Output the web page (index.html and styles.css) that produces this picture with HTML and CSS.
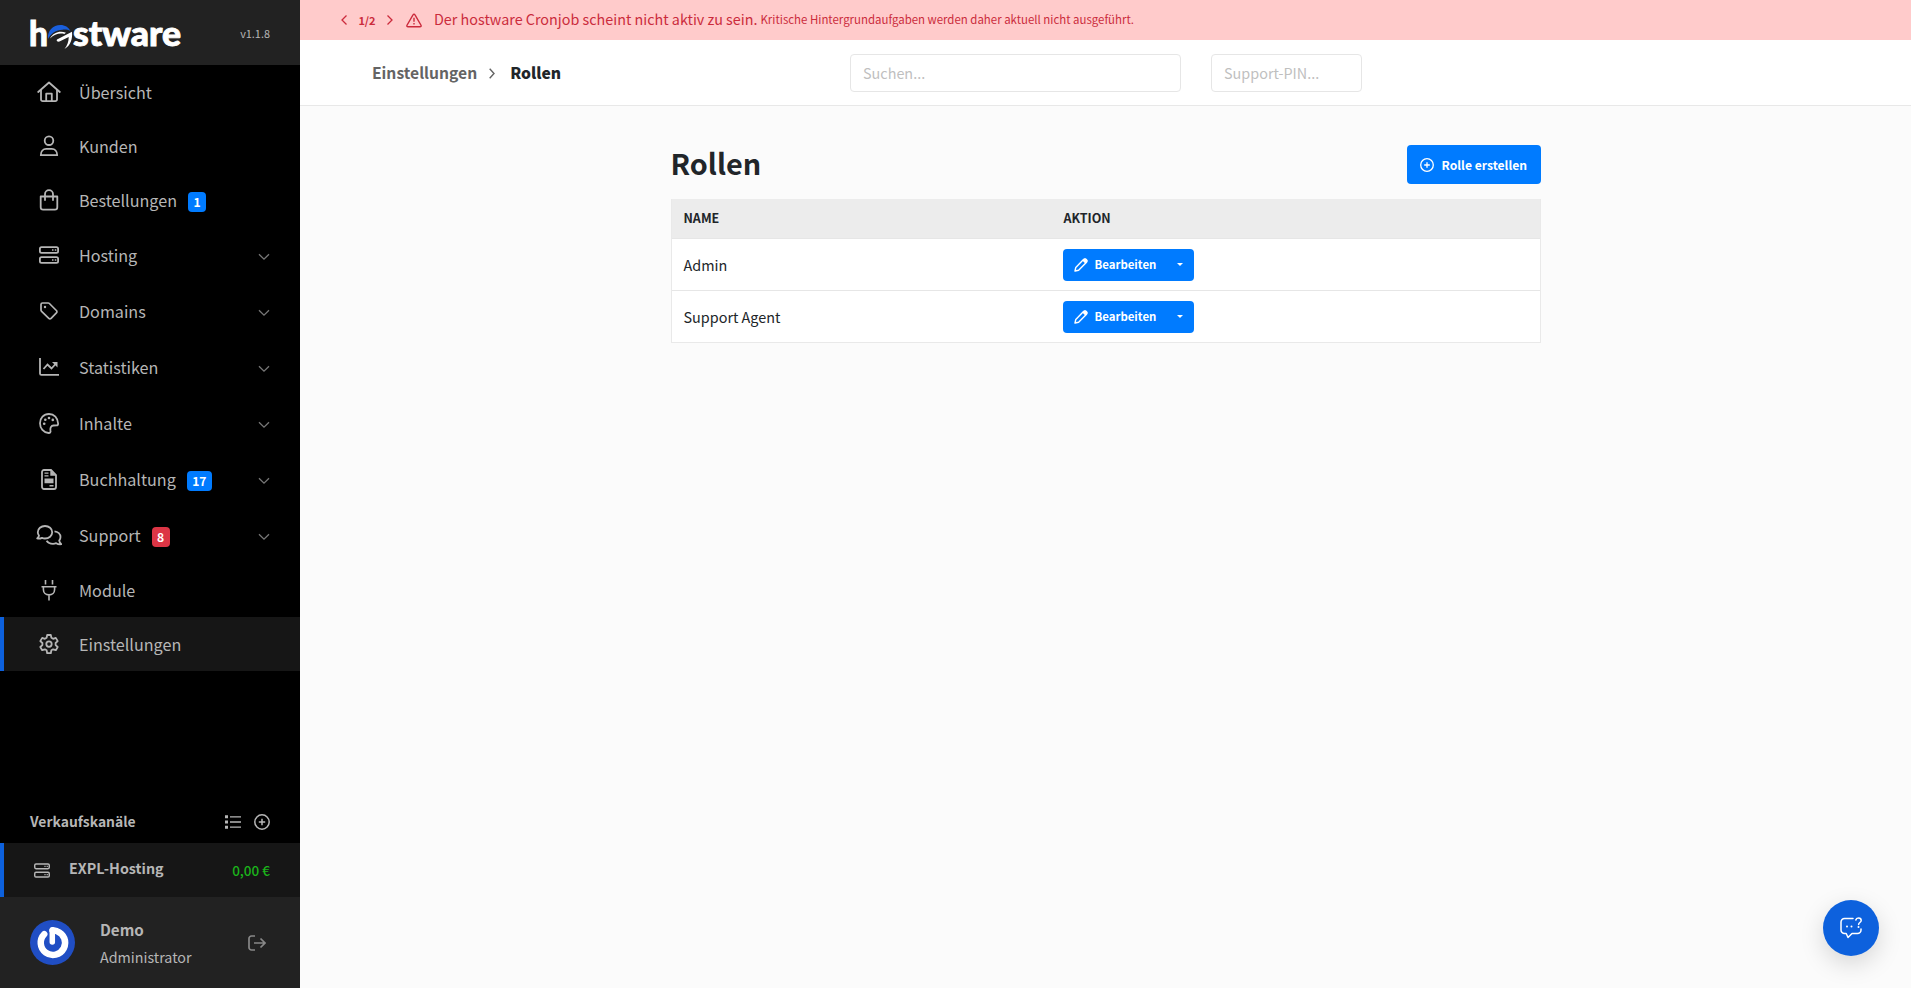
FILE: index.html
```html
<!DOCTYPE html>
<html lang="de">
<head>
<meta charset="utf-8">
<title>Rollen – hostware</title>
<link rel="stylesheet" href="styles.css">
</head>
<body>
<svg width="0" height="0" class="sprite" aria-hidden="true">
  <symbol id="chev" viewBox="0 0 12 8"><path d="M1 1.2l5 5 5-5" fill="none" stroke="currentColor" stroke-width="1.3"/></symbol>
  <symbol id="server" viewBox="0 0 20 18"><g fill="none" stroke="currentColor" stroke-width="1.8"><rect x=".9" y="1.2" width="18.2" height="5.6" rx="1.6"/><rect x=".9" y="11.2" width="18.2" height="5.6" rx="1.6"/></g><path d="M13 3.3h1.5v1.4H13zM15.8 3.3h1.5v1.4h-1.5zM13 13.3h1.5v1.4H13zM15.8 13.3h1.5v1.4h-1.5z" fill="currentColor"/></symbol>
  <symbol id="plus" viewBox="0 0 16 16"><g fill="none" stroke="currentColor"><circle cx="8" cy="8" r="7.2" stroke-width="1.5"/><path d="M8 4.8v6.4M4.8 8h6.4" stroke-width="1.5"/></g></symbol>
  <symbol id="pencil" viewBox="0 0 14 14"><path d="M1 13l.8-3.6 7.7-7.8c.9-.9 2-.8 2.800 0 .8.800.9 1.900 0 2.800l-7.700 7.800z" fill="none" stroke="currentColor" stroke-width="1.400" stroke-linejoin="round"/><path d="M8.300 2.600L10 1c1-.8 2-.6 2.700.2.800.8.900 1.900.1 2.800l-1.500 1.600z" fill="currentColor"/></symbol>
</svg>
<div class="app">
  <aside class="sidebar">
    <div class="brand">
      <svg class="logo" width="154" height="45" viewBox="0 0 154 45" role="img" aria-label="hostware">
        <text class="logo-text" x="-1" y="36.200" textLength="19" lengthAdjust="spacingAndGlyphs">h</text>
        <text class="logo-text" x="43" y="36.200" textLength="108" lengthAdjust="spacingAndGlyphs">stware</text>
        <path d="M18 29C17 21 23 15 30.500 15c4.500 0 8 2.200 10 6-2.500-1.300-5-1.600-8-1.300C26 20.300 21 23 18 29z" fill="#1a5fdc"/>
        <path d="M20 28.500c3.500-6 9.500-8 16-5.800l-1.700 1.300c-4.800-1.300-10 .3-14.300 4.500z" fill="#fff"/>
        <path d="M27 29.500l15-7.800c.8 7.300-1.500 13.800-7.500 17.300 2.900-3.600 4.200-7.800 4.200-12l-9.200 4.500c-1.800.6-3.600-.8-2.500-2z" fill="#fff"/>
      </svg>
      <span class="version">v1.1.8</span>
    </div>
    <nav class="menu">
      <a class="item"><span class="ico"><svg width="24" height="22" viewBox="0 0 24 22"><g fill="none" stroke="currentColor" stroke-width="1.800" stroke-linejoin="round" stroke-linecap="round"><path d="M1.200 11L12 1.500 22.800 11"/><path d="M4 9v9.500a1.700 1.700 0 0 0 1.700 1.700h12.600a1.700 1.700 0 0 0 1.700-1.700V9"/><path d="M9.200 20v-7.300h5.600V20"/></g></svg></span><span class="label">Übersicht</span></a>
      <a class="item"><span class="ico"><svg width="20" height="22" viewBox="0 0 20 22"><g fill="none" stroke="currentColor" stroke-width="1.800" stroke-linejoin="round"><circle cx="10" cy="5.700" r="4.300"/><path d="M1.800 20.200c0-4 2.400-6.400 5.400-6.400h5.600c3 0 5.400 2.400 5.400 6.400z"/></g></svg></span><span class="label">Kunden</span></a>
      <a class="item"><span class="ico"><svg width="20" height="22" viewBox="0 0 20 22"><g fill="none" stroke="currentColor" stroke-width="1.800" stroke-linecap="round"><path d="M1.700 7.500h16.600v10.700a2.400 2.400 0 0 1-2.400 2.400H4.100a2.400 2.400 0 0 1-2.400-2.400z" stroke-linejoin="round"/><path d="M6 11V5.200a4 4 0 0 1 8 0V11"/></g></svg></span><span class="label">Bestellungen</span><span class="badge">1</span></a>
      <a class="item sub"><span class="ico"><svg width="20" height="18"><use href="#server"/></svg></span><span class="label">Hosting</span><svg class="chev" width="12" height="8"><use href="#chev"/></svg></a>
      <a class="item sub"><span class="ico"><svg width="18" height="18" viewBox="0 0 18 18"><path d="M1 2.500A1.500 1.500 0 0 1 2.500 1h5.700c.5 0 .9.200 1.200.5l7 7c.7.700.7 1.600 0 2.300l-5.300 5.500c-.7.700-1.600.7-2.300 0l-7.200-7c-.4-.4-.6-.8-.6-1.300z" fill="none" stroke="currentColor" stroke-width="1.700"/><circle cx="5" cy="5" r="1.200" fill="currentColor"/></svg></span><span class="label">Domains</span><svg class="chev" width="12" height="8"><use href="#chev"/></svg></a>
      <a class="item sub"><span class="ico"><svg width="20" height="18" viewBox="0 0 20 18"><g fill="none" stroke="currentColor" stroke-width="1.800"><path d="M1 0v15.500c0 .9.500 1.400 1.400 1.400H20"/><path d="M4.500 11l4-4.500 4 4L17 5.500"/></g><path d="M13 4h5.500v5.500z" fill="currentColor"/></svg></span><span class="label">Statistiken</span><svg class="chev" width="12" height="8"><use href="#chev"/></svg></a>
      <a class="item sub"><span class="ico"><svg width="20" height="21" viewBox="0 0 20 21"><path d="M10 1C4.600 1 1 5.200 1 10.300c0 5 3.500 9.500 8.600 9.700 1.500.1 2.200-1 1.900-2.300-.5-2.600.5-5.100 3-5.200l3.200-.1c1 0 1.500-.7 1.400-1.900C18.800 5 15.200 1 10 1z" fill="none" stroke="currentColor" stroke-width="1.800"/><g fill="currentColor"><circle cx="5.200" cy="10.700" r="1.300"/><circle cx="6.300" cy="6.800" r="1.300"/><circle cx="10" cy="5" r="1.300"/><circle cx="13.800" cy="6.900" r="1.300"/></g></svg></span><span class="label">Inhalte</span><svg class="chev" width="12" height="8"><use href="#chev"/></svg></a>
      <a class="item sub"><span class="ico"><svg width="16" height="21" viewBox="0 0 16 21"><path d="M1 3a2 2 0 0 1 2-2h7l5 5v12a2 2 0 0 1-2 2H3a2 2 0 0 1-2-2z" fill="none" stroke="currentColor" stroke-width="1.800"/><path d="M9.300 1v5.700H15L9.300 1zM3.500 9.500h9v4.800h-9zM3.500 3.500h4v1.200h-4zM3.500 6.200h4v1.200h-4zM8.500 16h4v1.400h-4z" fill="currentColor"/></svg></span><span class="label">Buchhaltung</span><span class="badge">17</span><svg class="chev" width="12" height="8"><use href="#chev"/></svg></a>
      <a class="item sub"><span class="ico"><svg width="26" height="21" viewBox="0 0 26 21"><g fill="none" stroke="currentColor" stroke-width="1.800" stroke-linejoin="round"><path d="M1.200 13.500c1.200-1.100 1.700-2 1.800-2.900-.9-1-1.200-2.100-1.200-3.300C1.800 3.700 5 1 9 1s7.200 2.700 7.200 6.300-3.200 6.200-7.200 6.200c-1.100 0-2.100-.2-3-.6-1.600.8-3.200 1-4.800.6z"/><path d="M18.500 6.300c3.500.4 6 2.800 6 5.800 0 1.400-.5 2.500-1.300 3.500.2 1.200.9 2.300 2 3.600-2 .2-3.700-.2-5-1-1 .4-2 .6-3.200.6-3 0-5.300-1.200-6.400-3"/></g></svg></span><span class="label">Support</span><span class="badge red">8</span><svg class="chev" width="12" height="8"><use href="#chev"/></svg></a>
      <a class="item"><span class="ico"><svg width="16" height="21" viewBox="0 0 16 21"><path d="M4.500 0v4.500M11.500 0v4.500M.5 6.700h15M2.400 7v2.500c0 3.200 2.400 5.400 5.600 5.400s5.600-2.200 5.600-5.400V7M8 15v5.500" fill="none" stroke="currentColor" stroke-width="1.600"/></svg></span><span class="label">Module</span></a>
      <a class="item active"><span class="ico"><svg width="20" height="21" viewBox="0 0 20 21"><g fill="none" stroke="currentColor" stroke-width="1.800" stroke-linejoin="round"><path d="M8.200 1h3.600l.6 2.800 1.700 1 2.700-.9 1.900 3.200-2.100 1.900v2.100l2.100 1.900-1.900 3.200-2.700-.9-1.700 1-.6 2.900H8.200l-.6-2.900-1.700-1-2.700.9L1.300 13l2.100-1.900V9L1.300 7.100l1.900-3.200 2.700.9 1.700-1z"/><circle cx="10" cy="10.100" r="2.700"/></g></svg></span><span class="label">Einstellungen</span></a>
    </nav>
    <div class="channels">
      <div class="channels-head"><span>Verkaufskanäle</span>
        <svg width="16" height="14" viewBox="0 0 16 14"><path d="M5 1.800h11M5 7h11M5 12.200h11" stroke="currentColor" stroke-width="1.300"/><path d="M0 .3h3v3H0zM0 5.500h3v3H0zM0 10.700h3v3H0z" fill="currentColor"/></svg>
        <svg width="16" height="16"><use href="#plus"/></svg>
      </div>
      <a class="channel"><svg width="16" height="15" viewBox="0 0 20 18" preserveAspectRatio="none"><use href="#server" width="20" height="18"/></svg><b>EXPL-Hosting</b><span class="amount">0,00 €</span></a>
    </div>
    <div class="user">
      <svg width="45" height="45" viewBox="0 0 45 45"><circle cx="22.500" cy="22.500" r="22.500" fill="#204ec4"/><path d="M14.200 14.200A12.200 12.200 0 1 0 27 11.200L22.500 10.200" fill="none" stroke="#fff" stroke-width="6.500" stroke-linecap="round" stroke-linejoin="round"/><path d="M22.300 10v12" stroke="#fff" stroke-width="5.500" stroke-linecap="round"/></svg>
      <div class="who"><b>Demo</b><span>Administrator</span></div>
      <svg class="logout" width="18" height="16" viewBox="0 0 18 16"><path d="M7 1H3.500A2.500 2.500 0 0 0 1 3.500v9A2.500 2.500 0 0 0 3.500 15H7M6 8h11M12.500 3.500L17 8l-4.500 4.500" fill="none" stroke="currentColor" stroke-width="1.700"/></svg>
    </div>
  </aside>
  <main class="main">
    <div class="alert">
      <svg width="6" height="10" viewBox="0 0 6 10"><path d="M5.500.5L1 5l4.500 4.500" fill="none" stroke="currentColor" stroke-width="1.300"/></svg>
      <b class="count">1/2</b>
      <svg width="6" height="10" viewBox="0 0 6 10"><path d="M.5.500L5 5 .5 9.500" fill="none" stroke="currentColor" stroke-width="1.300"/></svg>
      <svg class="warn" width="16" height="15" viewBox="0 0 16 15"><path d="M8 1.200c.5 0 .8.200 1 .6l6 10.400c.4.900 0 1.600-1 1.600H2c-1 0-1.400-.7-1-1.600L7 1.800c.2-.4.500-.6 1-.6z" fill="none" stroke="currentColor" stroke-width="1.400"/><path d="M7.300 4.800h1.400v4H7.300zM7.300 10h1.400v1.500H7.300z" fill="currentColor"/></svg>
      <span class="alert-title">Der hostware Cronjob scheint nicht aktiv zu sein.</span><span class="alert-text">Kritische Hintergrundaufgaben werden daher aktuell nicht ausgeführt.</span>
    </div>
    <header class="topbar">
      <div class="crumbs"><span>Einstellungen</span><svg width="6" height="11" viewBox="0 0 6 11"><path d="M.7.700L5 5.500.7 10.300" fill="none" stroke="currentColor" stroke-width="1.400"/></svg><b>Rollen</b></div>
      <input class="field search" placeholder="Suchen...">
      <input class="field pin" placeholder="Support-PIN...">
    </header>
    <section class="content">
      <div class="title-row"><h1>Rollen</h1><button class="btn create"><svg width="14" height="14"><use href="#plus"/></svg><span>Rolle erstellen</span></button></div>
      <div class="table">
        <div class="row head"><span>NAME</span><span>AKTION</span></div>
        <div class="row"><span>Admin</span><button class="btn edit"><svg width="14" height="14"><use href="#pencil"/></svg><span>Bearbeiten</span><i class="caret"></i></button></div>
        <div class="row"><span>Support Agent</span><button class="btn edit"><svg width="14" height="14"><use href="#pencil"/></svg><span>Bearbeiten</span><i class="caret"></i></button></div>
      </div>
    </section>
  </main>
</div>
<button class="chat" aria-label="Hilfe"><svg width="22" height="22" viewBox="0 0 22 22"><g fill="none" stroke="currentColor" stroke-width="1.500" stroke-linecap="round" stroke-linejoin="round"><path d="M13 1.500H4.500A3.500 3.500 0 0 0 1 5v8a3.500 3.500 0 0 0 3.500 3.500h1.700L8 20.500l4-4h5.500A3.500 3.500 0 0 0 21 13v-1"/><path d="M15.800 3c.3-1.300 1.400-2 2.700-2 1.500 0 2.700 1 2.700 2.500 0 2-2.600 2-2.600 4"/></g><g fill="currentColor"><circle cx="18.500" cy="10" r="1"/><circle cx="7" cy="9.500" r="1"/><circle cx="11.500" cy="9.500" r="1"/></g></svg></button>
</body>
</html>
```
FILE: styles.css
```css
* { box-sizing: border-box; }
body { margin: 0; background: #fbfbfb; color: #212529; font: 14.4px/1.5 "Noto Sans CJK SC", "Noto Sans", sans-serif; }
svg { flex: none; display: block; }
.sprite { position: absolute; }
.app { display: flex; height: 988px; }
.sidebar { width: 300px; flex: none; display: flex; flex-direction: column; background: #000; color: #b6b6b6; }
.brand { height: 65px; flex: none; display: flex; align-items: center; justify-content: space-between; padding: 0 30px; background: #222; }
.logo { overflow: visible; }
.logo-text { font: 900 35px Lato, sans-serif; fill: #fff; stroke: #fff; stroke-width: .9px; }
.version { font-size: 10.900px; line-height: 16px; }
.menu { display: flex; flex-direction: column; }
.item { height: 54px; display: flex; align-items: center; padding: 0 30px 0 26px; border-left: 4px solid transparent; font-size: 16.150px; line-height: 24px; }
.sub { height: 56px; }
.active { background: #161616; border-color: #0d61dd; }
.ico { width: 38px; display: flex; justify-content: center; margin: 0 11px 0 0; }
.chev { margin: 4px 0 0 auto; color: #777; }
.badge { margin: 4px 0 0 11px; padding: 0 5.500px; height: 20px; border-radius: 4px; background: #007bff; color: #fff; font-size: 12.100px; font-weight: 700; line-height: 19px; }
.red { background: #dc3545; }
.channels { margin-top: auto; }
.channels-head { display: flex; align-items: center; gap: 13px; height: 43px; padding: 0 30px; font-size: 13.900px; font-weight: 700; }
.channels-head span { margin-right: auto; }
.channel { display: flex; align-items: center; height: 54px; padding: 0 30px; background: #161616; border-left: 4px solid #0d61dd; font-size: 14.300px; }
.channel b { margin: -4px 0 0 19px; }
.channel .amount { margin-left: auto; color: #1bb31b; font-size: 13.500px; font-weight: 500; }
.user { display: flex; align-items: center; height: 91px; padding: 0 34px 0 30px; background: #222; }
.who { display: flex; flex-direction: column; margin-left: 25px; gap: 4px; font-size: 14.300px; line-height: 24px; }
.who b { font-size: 15.200px; }
.logout { margin-left: auto; color: #888; }
.main { flex: 1; }
.alert { height: 40px; display: flex; align-items: center; padding-left: 41px; background: #ffcbcb; color: #cb2b3c; }
.count { width: 40px; text-align: center; font-size: 11px; }
.warn { margin: 0 12px 0 13px; }
.alert-title { margin-top: -2px; font-size: 14.350px; }
.alert-text { margin: 0 0 0 3px; font-size: 11.450px; }
.topbar { height: 66px; display: flex; align-items: center; padding-left: 72px; background: #fff; border-bottom: 1px solid #e8e8e8; }
.crumbs { width: 478px; display: flex; align-items: center; font-size: 15.650px; font-weight: 700; color: #646464; }
.crumbs svg { margin: 3px 15px 0 12px; }
.crumbs b { color: #212529; }
.field { height: 38px; padding: 0 12px; border: 1px solid #e6e6e6; border-radius: 4px; background: #fff; font: inherit; }
.field::placeholder { color: #bfbfbf; }
.search { width: 331px; }
.pin { width: 151px; margin-left: 30px; }
.content { width: 870px; margin: 39px auto 0; }
.title-row { display: flex; align-items: center; justify-content: space-between; height: 39px; margin-bottom: 15px; }
h1 { margin: -4px 0 0; font-size: 28.800px; line-height: 36px; }
.btn { display: flex; align-items: center; border: 0; border-radius: 4px; background: #007bff; color: #fff; font: 700 12.150px/18px "Noto Sans CJK SC", "Noto Sans", sans-serif; }
.create { width: 134px; height: 39px; padding: 0 13px; gap: 8px; }
.table { border: 1px solid #e9e9e9; border-top: 0; background: #fff; }
.row { display: grid; grid-template-columns: 380px 1fr; align-items: center; height: 52px; padding-left: 11px; border-top: 1px solid #e6e6e6; }
.row > span { margin-left: 1px; }
.head { height: 39px; border: 0; background: #ececec; font-size: 12.500px; font-weight: 700; }
.edit { width: 131px; height: 32px; padding: 0 11px; font-size: 11.400px; }
.edit span { margin: -2px 0 0 7px; }
.caret { margin-left: auto; border: 3px solid transparent; border-top-color: #fff; border-bottom: 0; }
.chat { position: fixed; right: 32px; bottom: 32px; width: 56px; height: 56px; display: grid; place-items: center; border: 0; border-radius: 50%; background: #0d61dd; color: #fff; box-shadow: 0 8px 24px rgba(0, 0, 0, .15); }
```
